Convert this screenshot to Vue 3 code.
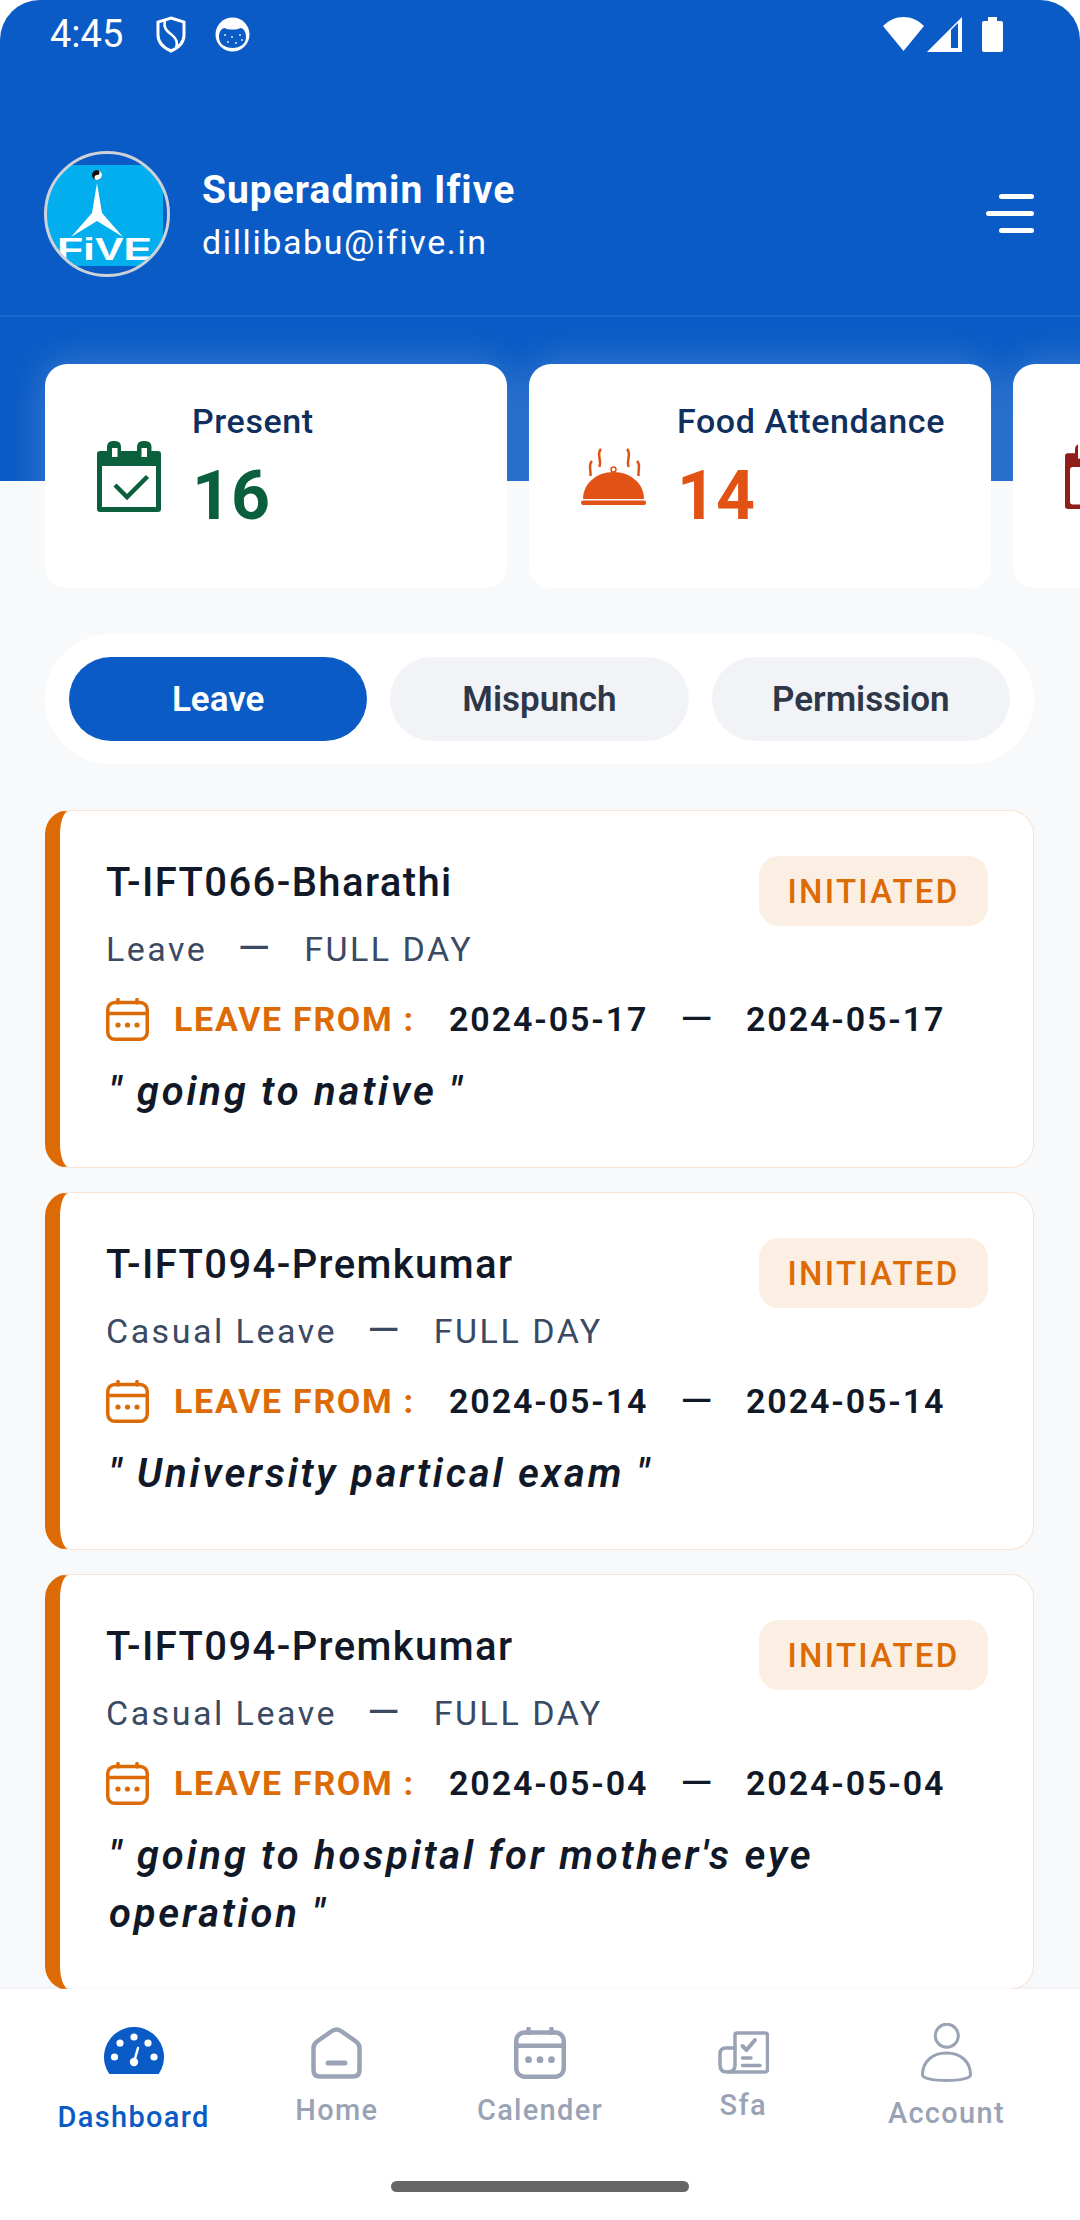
<script setup>
const tabs = ['Leave', 'Mispunch', 'Permission']
const requests = [
  { id: 1, name: 'T-IFT066-Bharathi', type: 'Leave', from: '2024-05-17', to: '2024-05-17', reason: 'going to native' },
  { id: 2, name: 'T-IFT094-Premkumar', type: 'Casual Leave', from: '2024-05-14', to: '2024-05-14', reason: 'University partical exam' },
  { id: 3, name: 'T-IFT094-Premkumar', type: 'Casual Leave', from: '2024-05-04', to: '2024-05-04', reason: "going to hospital for mother's eye operation" }
]
</script>

<template>
  <div class="page">
    <header class="header">
      <div class="status">
        <span class="time">4:45</span>
        <svg class="st-shield" viewBox="0 0 30 37" fill="none" stroke="#fff" stroke-width="3">
          <path d="M15 2 L28 6 V19 C28 27 22 32 15 35 C8 32 2 27 2 19 V6 Z" />
          <path d="M9 5 C7 12 11 15 16 19 C21 23 22 27 20 32" stroke-width="2.5" />
        </svg>
        <svg class="st-cat" viewBox="0 0 35 35">
          <circle cx="17.5" cy="17.5" r="17" fill="#fff" />
          <path d="M4 20 C4 14 7 11 10 11 C12 13 23 13 25 11 C28 11 31 14 31 20 C31 27 25 31 17.5 31 C10 31 4 27 4 20 Z" fill="#0a5bc5" />
          <g fill="#dfe9f7">
            <circle cx="10" cy="18" r="1" /><circle cx="17" cy="20" r="1" /><circle cx="25" cy="18" r="1" />
            <circle cx="13" cy="25" r="1" /><circle cx="21" cy="26" r="1" /><circle cx="27" cy="23" r="1" />
          </g>
        </svg>
        <span class="status-gap"></span>
        <svg class="st-wifi" viewBox="0 0 41 34"><path d="M0 9 C6 3 13 0 20.500 0 C28 0 35 3 41 9 L20.500 34 Z" fill="#fff" /></svg>
        <svg class="st-signal" viewBox="0 0 35 35">
          <path d="M0 35 L35 0 V35 Z" fill="#fff" />
          <path d="M24 31 V13 L31 6 V31 Z" fill="#0a5bc5" />
        </svg>
        <svg class="st-battery" viewBox="0 0 21 35">
          <path d="M6 0 H15 V4 H19 Q21 4 21 6 V33 Q21 35 19 35 H2 Q0 35 0 33 V6 Q0 4 2 4 H6 Z" fill="#fff" />
        </svg>
      </div>

      <div class="profile">
        <svg class="avatar" viewBox="0 0 126 126">
          <defs>
            <clipPath id="avatarClip"><circle cx="63" cy="63" r="61" /></clipPath>
          </defs>
          <g clip-path="url(#avatarClip)">
            <rect x="0" y="14" width="119" height="101" fill="#03aeef" />
            <path d="M53 32 L58 62 L79 86 L53 70 L27 86 L48 62 Z" fill="#fff" />
            <text x="13" y="109" class="logo-text" textLength="95" lengthAdjust="spacingAndGlyphs">FiVE</text>
          </g>
          <circle cx="53" cy="24" r="5" fill="#111" />
          <path d="M53 19 A5 5 0 0 1 53 29 A2.500 2.500 0 0 1 53 24 A2.500 2.500 0 0 0 53 19 Z" fill="#fff" />
          <circle cx="63" cy="63" r="61.500" fill="none" stroke="#cdd1d8" stroke-width="3" />
        </svg>
        <div class="who">
          <div class="who-name">Superadmin Ifive</div>
          <div class="who-mail">dillibabu@ifive.in</div>
        </div>
        <div class="menu">
          <span class="short"></span>
          <span></span>
          <span class="short"></span>
        </div>
      </div>
    </header>

    <div class="stats">
      <div class="stat">
        <svg class="stat-icon" viewBox="0 0 64 71" width="64" height="71">
          <path d="M3 10 H10 V6 Q10 0 16 0 H18 Q24 0 24 6 V10 H40 V6 Q40 0 46 0 H48 Q54.500 0 54.500 6 V10 H61 Q64 10 64 13 V68 Q64 71 61 71 H3 Q0 71 0 68 V13 Q0 10 3 10 Z" fill="#0a5f3c" />
          <rect x="15" y="7" width="5.500" height="9" fill="#fff" />
          <rect x="44.500" y="7" width="5.500" height="9" fill="#fff" />
          <rect x="5" y="25" width="54" height="41" fill="#fff" />
          <path d="M18 44 L30 56 L50.500 35.500" fill="none" stroke="#0a5f3c" stroke-width="4.500" />
        </svg>
        <div class="stat-text">
          <div class="stat-label">Present</div>
          <div class="stat-value green">16</div>
        </div>
      </div>
      <div class="stat">
        <svg class="stat-icon" viewBox="0 0 65 57" width="65" height="57">
          <g fill="none" stroke="#e25215" stroke-width="2.500">
            <path d="M11 13 C7 17 10 20 9.500 28" />
            <path d="M20 1 C15 6 21 11 18.500 19" />
            <path d="M46 1 C51 6 45 11 47.500 19" />
            <path d="M56 13 C60 17 57 20 57.500 28" />
          </g>
          <circle cx="32.500" cy="21.500" r="2.500" fill="none" stroke="#e25215" stroke-width="1.500" />
          <path d="M2 51 C2 36 15 24 32.500 24 C50 24 63 36 63 51 Z" fill="#e25215" />
          <rect x="0" y="52.500" width="65" height="4.500" rx="2" fill="#e25215" />
        </svg>
        <div class="stat-text">
          <div class="stat-label">Food Attendance</div>
          <div class="stat-value orange">14</div>
        </div>
      </div>
      <div class="stat">
        <svg class="stat-icon" viewBox="0 0 64 71" width="64" height="65" preserveAspectRatio="none">
          <path d="M3 10 H10 V6 Q10 0 16 0 H18 Q24 0 24 6 V10 H40 V6 Q40 0 46 0 H48 Q54.500 0 54.500 6 V10 H61 Q64 10 64 13 V68 Q64 71 61 71 H3 Q0 71 0 68 V13 Q0 10 3 10 Z" fill="#8f1d1a" />
          <rect x="13" y="0" width="8" height="16" fill="#fff" />
          <rect x="5" y="25" width="54" height="41" rx="3" fill="#fff" />
        </svg>
      </div>
    </div>

    <div class="tabs">
      <div v-for="(tab, i) in tabs" :key="tab" class="tab" :class="{ active: i === 0 }">{{ tab }}</div>
    </div>

    <div class="list">
      <div v-for="item in requests" :key="item.id" class="req">
        <div class="req-top">
          <div class="req-name">{{ item.name }}</div>
          <div class="chip">INITIATED</div>
        </div>
        <div class="req-sub">
          <span>{{ item.type }}</span>
          <span class="sub-dash">—</span>
          <span>FULL DAY</span>
        </div>
        <div class="req-dates">
          <svg class="cal" viewBox="0 0 43 43" fill="none" stroke="#dd6b05" stroke-width="3.500" stroke-linecap="round">
            <rect x="1.750" y="4.500" width="39.500" height="36.750" rx="7" />
            <path d="M2 15.500 H41 M12 1.500 V5 M31 1.500 V5" />
            <g fill="#dd6b05" stroke="none">
              <circle cx="12" cy="27" r="2.600" /><circle cx="21.500" cy="27" r="2.600" /><circle cx="31" cy="27" r="2.600" />
            </g>
          </svg>
          <span class="from-label">LEAVE FROM :</span>
          <span class="date">{{ item.from }}</span>
          <span class="date-dash">—</span>
          <span class="date">{{ item.to }}</span>
        </div>
        <div class="req-reason">" {{ item.reason }} "</div>
      </div>
    </div>

    <nav class="nav">
      <div class="nav-row">
        <div class="nav-item current dash-item">
          <svg viewBox="0 0 60 59" width="60" height="59">
            <path d="M5.300 47 A30 30 0 1 1 54.700 47 Z" fill="#0a5bc5" />
            <g fill="#fff">
              <circle cx="30" cy="10" r="3.600" /><circle cx="16" cy="16" r="3.600" /><circle cx="44" cy="16" r="3.600" />
              <circle cx="10.500" cy="30" r="3.600" /><circle cx="50" cy="30" r="3.600" /><circle cx="30" cy="35" r="4.200" />
            </g>
            <path d="M30 35 L34 21" stroke="#fff" stroke-width="2.500" stroke-linecap="round" />
          </svg>
          <span>Dashboard</span>
        </div>
        <div class="nav-item">
          <svg viewBox="0 0 51 52" width="51" height="52" fill="none" stroke="#9aa3b5" stroke-width="4.500" stroke-linecap="round">
            <path d="M2.500 21 Q2.500 17 6 14.500 L21 4 Q25.500 1 30 4 L45 14.500 Q48.500 17 48.500 21 V43 Q48.500 49.500 42 49.500 H9 Q2.500 49.500 2.500 43 Z" />
            <path d="M17 36 H34" stroke-width="5" />
          </svg>
          <span>Home</span>
        </div>
        <div class="nav-item">
          <svg viewBox="0 0 43 43" width="52" height="52" fill="none" stroke="#9aa3b5" stroke-width="3.700" stroke-linecap="round">
            <rect x="1.850" y="4.500" width="39.300" height="36.650" rx="7" />
            <path d="M2 15.500 H41 M12 1.500 V5 M31 1.500 V5" />
            <g fill="#9aa3b5" stroke="none">
              <circle cx="12" cy="27" r="2.800" /><circle cx="21.500" cy="27" r="2.800" /><circle cx="31" cy="27" r="2.800" />
            </g>
          </svg>
          <span>Calender</span>
        </div>
        <div class="nav-item">
          <svg viewBox="0 0 51 43" width="51" height="43" fill="none" stroke="#9aa3b5" stroke-width="3.500" stroke-linecap="round" stroke-linejoin="round">
            <path d="M17 17 V4 Q17 2 19 2 H47 Q49.500 2 49.500 4 V38.500 Q49.500 41 47 41 H10" />
            <path d="M17 17 H8 Q2 17 2 23 V34 Q2 41 9 41 Q17 41 17 34 V17 Z" />
            <path d="M24.500 15 L28.500 19 L37 9" stroke-width="4" />
            <path d="M24.500 27 H33 M24.500 34.500 H42" />
          </svg>
          <span>Sfa</span>
        </div>
        <div class="nav-item">
          <svg viewBox="0 0 51 59" width="51" height="59" fill="none" stroke="#9aa3b5" stroke-width="3">
            <circle cx="25.800" cy="12.700" r="11.500" />
            <path d="M1.500 52 C1.500 38 12 30 25.500 30 C39 30 49.500 38 49.500 52 C49.500 55 40 57.500 25.500 57.500 C11 57.500 1.500 55 1.500 52 Z" />
          </svg>
          <span>Account</span>
        </div>
      </div>
      <div class="home-bar"></div>
    </nav>
  </div>
</template>

<style>
html, body { margin: 0; background: #fff; }
</style>

<style scoped>
.page {
  width: 1080px;
  height: 2220px;
  display: flex;
  flex-direction: column;
  overflow: hidden;
  background: #f7f9fb;
  font-family: Roboto, "Liberation Sans", sans-serif;
  border-radius: 40px 40px 0 0;
}
.header {
  height: 481px;
  flex: none;
  box-sizing: border-box;
  background: #0a5bc5;
  color: #fff;
}
.status {
  height: 68px;
  display: flex;
  align-items: center;
  padding: 0 77px 0 50px;
}
.time { font-size: 38px; width: 106px; }
.st-shield { width: 30px; height: 37px; margin-right: 29px; }
.st-cat { width: 35px; height: 35px; }
.status-gap { flex: 1; }
.st-wifi { width: 41px; height: 34px; margin-right: 3px; }
.st-signal { width: 35px; height: 35px; margin-right: 20px; }
.st-battery { width: 21px; height: 35px; }
.profile {
  height: 249px;
  box-sizing: border-box;
  padding: 44px 46px 0 44px;
  display: flex;
  align-items: center;
  border-bottom: 2px solid #1a66cc;
}
.avatar { width: 126px; height: 126px; flex: none; margin-right: 32px; }
.logo-text { font: 700 32px "Liberation Sans", sans-serif; fill: #fff; }
.who { flex: 1; margin-top: 3px; }
.who-name { font-size: 39px; font-weight: 700; line-height: 48px; letter-spacing: 1px; }
.who-mail { font-size: 34px; line-height: 44px; margin-top: 6px; letter-spacing: 1.600px; }
.menu { width: 48px; display: flex; flex-direction: column; align-items: flex-end; gap: 12px; }
.menu span { width: 48px; height: 5px; border-radius: 3px; background: #fff; }
.menu span.short { width: 35px; }

.stats {
  flex: none;
  display: flex;
  gap: 22px;
  padding-left: 45px;
  margin-top: -117px;
  height: 224px;
}
.stat {
  width: 462px;
  flex: none;
  box-sizing: border-box;
  padding: 0 0 0 52px;
  display: flex;
  align-items: center;
  gap: 31px;
  background: #fff;
  border-radius: 22px;
  box-shadow: 0 0 42px rgba(255, 255, 255, 0.22);
}
.stat-icon { flex: none; }
.stat-text { display: flex; flex-direction: column; margin-top: -17px; }
.stat-label { font-size: 34px; font-weight: 500; line-height: 44px; color: #0f2f5f; letter-spacing: 0.6px; }
.stat-value { font-size: 68px; font-weight: 700; line-height: 80px; margin-top: 13px; }
.green { color: #0a5f3c; }
.orange { color: #e25215; }

.tabs {
  flex: none;
  margin: 46px 46px 46px 45px;
  height: 130px;
  box-sizing: border-box;
  padding: 23px 24px;
  display: flex;
  gap: 23px;
  background: #fff;
  border-radius: 65px;
}
.tab {
  flex: 1;
  border-radius: 42px;
  background: #f1f3f7;
  color: #2d3748;
  font-size: 35px;
  font-weight: 600;
  display: flex;
  align-items: center;
  justify-content: center;
}
.tab.active { background: #0a5bc5; color: #fff; }

.list {
  flex: 1;
  min-height: 0;
  overflow: hidden;
  padding: 0 46px 0 45px;
  display: flex;
  flex-direction: column;
  gap: 24px;
}
.req {
  flex: none;
  box-sizing: border-box;
  background: #fff;
  border: 1px solid #f8e4d2;
  border-left: 15px solid #dd6b05;
  border-radius: 24px;
  padding: 45px 45px 46px 46px;
}
.req-top { display: flex; justify-content: space-between; align-items: flex-start; }
.req-name { font-size: 40px; font-weight: 500; line-height: 54px; color: #111827; letter-spacing: 1.400px; }
.chip {
  width: 229px;
  height: 70px;
  border-radius: 20px;
  background: #fbeee3;
  color: #dd6b05;
  font-size: 33px;
  font-weight: 500;
  letter-spacing: 2.300px;
  display: flex;
  align-items: center;
  justify-content: center;
}
.req-sub {
  margin-top: 3px;
  font-size: 34px;
  line-height: 40px;
  color: #3a4a63;
  letter-spacing: 2.500px;
  display: flex;
  gap: 30px;
}
.sub-dash { font-size: 42px; letter-spacing: 0; margin-right: 4px; }
.req-dates { margin-top: 28px; height: 44px; display: flex; align-items: center; white-space: nowrap; }
.cal { width: 43px; height: 43px; flex: none; margin-right: 25px; }
.from-label { font-size: 34px; font-weight: 700; color: #dd6b05; letter-spacing: 1.700px; width: 275px; flex: none; }
.date { font-size: 34px; font-weight: 600; color: #111827; letter-spacing: 1.900px; width: 198px; flex: none; }
.date-dash { font-size: 42px; color: #111827; width: 99px; flex: none; padding-left: 33px; box-sizing: border-box; }
.req-reason {
  margin-top: 22px;
  padding-left: 3px;
  font-size: 40px;
  font-style: italic;
  font-weight: 600;
  line-height: 58px;
  color: #111827;
  letter-spacing: 2.800px;
}

.nav {
  flex: none;
  height: 231px;
  background: #fff;
  box-shadow: 0 -2px 4px rgba(20, 40, 80, 0.03);
  position: relative;
}
.nav-row {
  height: 178px;
  padding: 0 32px;
  display: flex;
  align-items: center;
}
.nav-item {
  flex: 1;
  display: flex;
  flex-direction: column;
  align-items: center;
  gap: 11px;
  color: #9aa3b5;
  font-size: 29px;
  font-weight: 500;
  letter-spacing: 1.300px;
}
.nav-item span { line-height: 40px; }
.nav-item svg { display: block; }
.dash-item { margin-top: 7px; }
.nav-item.current { color: #0a5bc5; }
.home-bar {
  width: 298px;
  height: 11px;
  margin: 14px auto 0;
  border-radius: 6px;
  background: #666;
}
</style>
